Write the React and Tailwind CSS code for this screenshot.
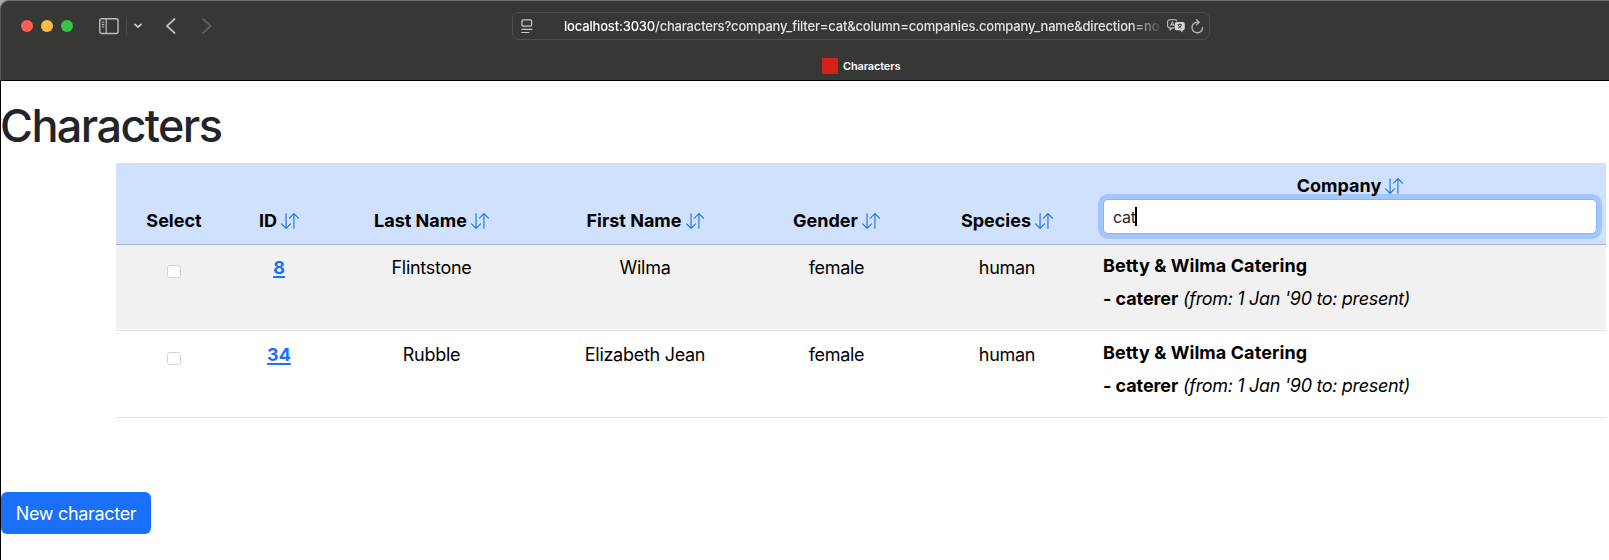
import { BsArrowDownUp } from "react-icons/bs";

const rows = [
  { id: "8", last: "Flintstone", first: "Wilma", bg: "bg-[#f1f1f1]", h: "h-[84px]", wrap: "pb-px" },
  { id: "34", last: "Rubble", first: "Elizabeth Jean", bg: "bg-white", h: "h-[85px]", wrap: "pt-px" },
];

const grid = "grid grid-cols-[116px_94px_211px_216px_167px_174px_512px]";

function Heading({ label }) {
  return (
    <div className="flex items-center justify-center gap-[4px] leading-[27px] font-bold whitespace-nowrap">
      <span>{label}</span>
      {label !== "Select" && <BsArrowDownUp className="size-[18px] shrink-0 text-[#1a70fb]" />}
    </div>
  );
}

function SidebarIcon() {
  return (
    <svg width="20" height="17" viewBox="0 0 20 17" fill="none" stroke="#bdbdbb">
      <rect x="0.75" y="0.75" width="18.3" height="14.8" rx="2" strokeWidth="1.4" />
      <path d="M7.2 1v14.4" strokeWidth="1.2" />
      <path d="M2.9 4.2h2.3M2.9 6.6h2.3M2.9 9h2.3" strokeWidth="1.1" />
    </svg>
  );
}

function ReaderIcon() {
  return (
    <svg width="12" height="15" viewBox="0 0 12 15" fill="none" stroke="#c8c8c6" strokeWidth="1.2">
      <rect x="1" y="0.9" width="9.6" height="6.3" rx="1.2" />
      <path d="M0.4 10.4h11M0.4 13.5h8" />
    </svg>
  );
}

function TranslateIcon() {
  return (
    <svg width="18" height="14" viewBox="0 0 18 14" fill="none">
      <path
        d="M7.2 8.9H5.2L3.2 10.9V8.9H2.6A1.9 1.9 0 0 1 .7 7V2.7A1.9 1.9 0 0 1 2.6.8h5.6a1.9 1.9 0 0 1 1.7 1.3"
        stroke="#c8c8c6"
        strokeWidth="1.1"
      />
      <path d="M3.5 7.2 5.3 2.7l1.8 4.5M4.1 5.7h2.5" stroke="#c8c8c6" strokeWidth="1" />
      <path
        d="M9.7 3h6.1a2 2 0 0 1 2 2v4.3a2 2 0 0 1-2 2h-.3v2.3l-2.4-2.3H9.7a2 2 0 0 1-2-2V5a2 2 0 0 1 2-2Z"
        fill="#d6d6d4"
      />
      <path d="M10.6 5.7h4.4M12.8 4.5v1.2M14.3 5.9c-.4 1.5-1.5 2.7-3.3 3.4M11.3 6.1c.4 1.3 1.6 2.5 3.3 3.1" stroke="#373735" strokeWidth="0.9" />
    </svg>
  );
}

function ReloadIcon() {
  return (
    <svg width="13" height="15" viewBox="0 0 13 15" fill="none" stroke="#b4b4b2" strokeWidth="1.4" strokeLinecap="round" strokeLinejoin="round">
      <path d="M7.2 3.2H6.2a5.3 5.3 0 1 0 5.4 5.3" />
      <path d="M5.6 0.8 8.1 3.2 5.6 5.7" />
    </svg>
  );
}

function Toolbar() {
  return (
    <header className="h-[81px] bg-[#a9ad9f]">
      <div className="flex h-full flex-col rounded-tl-[9px] border-t border-b border-l border-t-[#6e6e6c] border-b-black border-l-[#5c5c5a] bg-[#373735]">
        <div className="flex h-[50px] items-center">
          <div className="ml-[20px] flex gap-2">
            <span className="size-3 rounded-full bg-[#ff5f57]" />
            <span className="size-3 rounded-full bg-[#febc40]" />
            <span className="size-3 rounded-full bg-[#33c748]" />
          </div>
          <div className="ml-[26px] flex items-center">
            <SidebarIcon />
            <span className="ml-[7px] h-[18px] w-px bg-[#4b4b49]" />
            <svg className="ml-[7px]" width="8" height="6" viewBox="0 0 8 6" fill="none" stroke="#d0d0ce" strokeWidth="1.6" strokeLinecap="round" strokeLinejoin="round">
              <path d="M1 1.4 4 4.2 7 1.4" />
            </svg>
          </div>
          <svg className="ml-[24px]" width="10" height="16" viewBox="0 0 10 16" fill="none" stroke="#bdbdbb" strokeWidth="1.7" strokeLinecap="round" strokeLinejoin="round">
            <path d="M8.6 1 1 8l7.6 7" />
          </svg>
          <svg className="ml-[26px]" width="10" height="16" viewBox="0 0 10 16" fill="none" stroke="#5f5f5d" strokeWidth="1.7" strokeLinecap="round" strokeLinejoin="round">
            <path d="M1 1 8.6 8 1 15" />
          </svg>
          <div className="ml-[300px] flex h-[28px] w-[698px] items-center rounded-[7px] border border-[#4f4f4d] pr-[5px] pl-[8px]">
            <ReaderIcon />
            <div className="ml-[31px] w-[597px] mask-r-from-[565px] mask-r-to-[600px] text-[13px] leading-[20px] font-medium tracking-[-0.18px] whitespace-nowrap text-[#e4e4e2]">
              <span className="text-white">localhost:3030</span>
              <span>/characters?company_filter=cat&amp;column=companies.company_name&amp;direction=no</span>
            </div>
            <div className="ml-[6px] flex items-center gap-[6px]">
              <TranslateIcon />
              <ReloadIcon />
            </div>
          </div>
        </div>
        <div className="flex h-[29px] items-center justify-start gap-[5px] pl-[821px]">
          <span className="size-4 bg-[#d42017]" />
          <span className="text-[11px] leading-[16px] font-semibold tracking-[-0.15px] text-white">Characters</span>
        </div>
      </div>
    </header>
  );
}

export default function App() {
  return (
    <div className="h-[560px] w-[1609px] overflow-hidden bg-white font-['Inter','Liberation_Sans',sans-serif] text-[18px] text-black">
      <Toolbar />
      <main className="h-[479px] border-l border-black pt-[18px]">
        <h1 className="-ml-px h-[64px] text-[45px] leading-[54px] font-medium tracking-[-1.6px] text-[#212529]">Characters</h1>
        <section className="ml-[115px] w-[1490px]">
          <div className={`${grid} h-[82px] items-end border-b border-[#a6b5cc] bg-[#d0e1fe] pb-[10px]`}>
            <Heading label="Select" />
            <Heading label="ID" />
            <Heading label="Last Name" />
            <Heading label="First Name" />
            <Heading label="Gender" />
            <Heading label="Species" />
            <div className="px-[9px]">
              <Heading label="Company" />
              <div className="flex h-[35px] items-center rounded-[5px] border border-[#86b6fe] bg-white pl-[9px] text-[16px] tracking-[-0.3px] text-[#212529] ring-5 ring-[#a3c5fe]">
                <span>cat</span>
                <span className="-ml-px h-[19px] w-[2px] bg-black" />
              </div>
            </div>
          </div>
          {rows.map((r) => (
            <div key={r.id} className={`border-b border-[#dee2e6] ${r.wrap}`}>
              <div className={`${grid} ${r.bg} ${r.h} text-center leading-[27px] tracking-[-0.28px]`}>
                <div className="flex justify-center pt-[20px]">
                  <span className="h-[13px] w-[14px] rounded-[3px] border border-[#d2d2d2] bg-white" />
                </div>
                <div className="pt-[9px]">
                  <a className="font-bold tracking-normal text-[#1a70fb] underline decoration-2 underline-offset-2">{r.id}</a>
                </div>
                <div className="pt-[9px]">{r.last}</div>
                <div className="pt-[9px]">{r.first}</div>
                <div className="pt-[9px]">female</div>
                <div className="pt-[9px]">human</div>
                <div className="pt-[4px] pl-[9px] text-left leading-[33px]">
                  <div className="font-bold tracking-[0.08px]">Betty &amp; Wilma Catering</div>
                  <div>
                    <span className="font-bold tracking-[-0.08px]">- caterer</span>{" "}
                    <span className="tracking-[-0.33px] italic">(from: 1 Jan &#39;90 to: present)</span>
                  </div>
                </div>
              </div>
            </div>
          ))}
        </section>
        <button className="mt-[74px] flex h-[42px] w-[150px] items-center justify-center rounded-[6px] bg-[#1a70fb] tracking-[-0.32px] whitespace-nowrap text-white">
          New character
        </button>
      </main>
    </div>
  );
}
